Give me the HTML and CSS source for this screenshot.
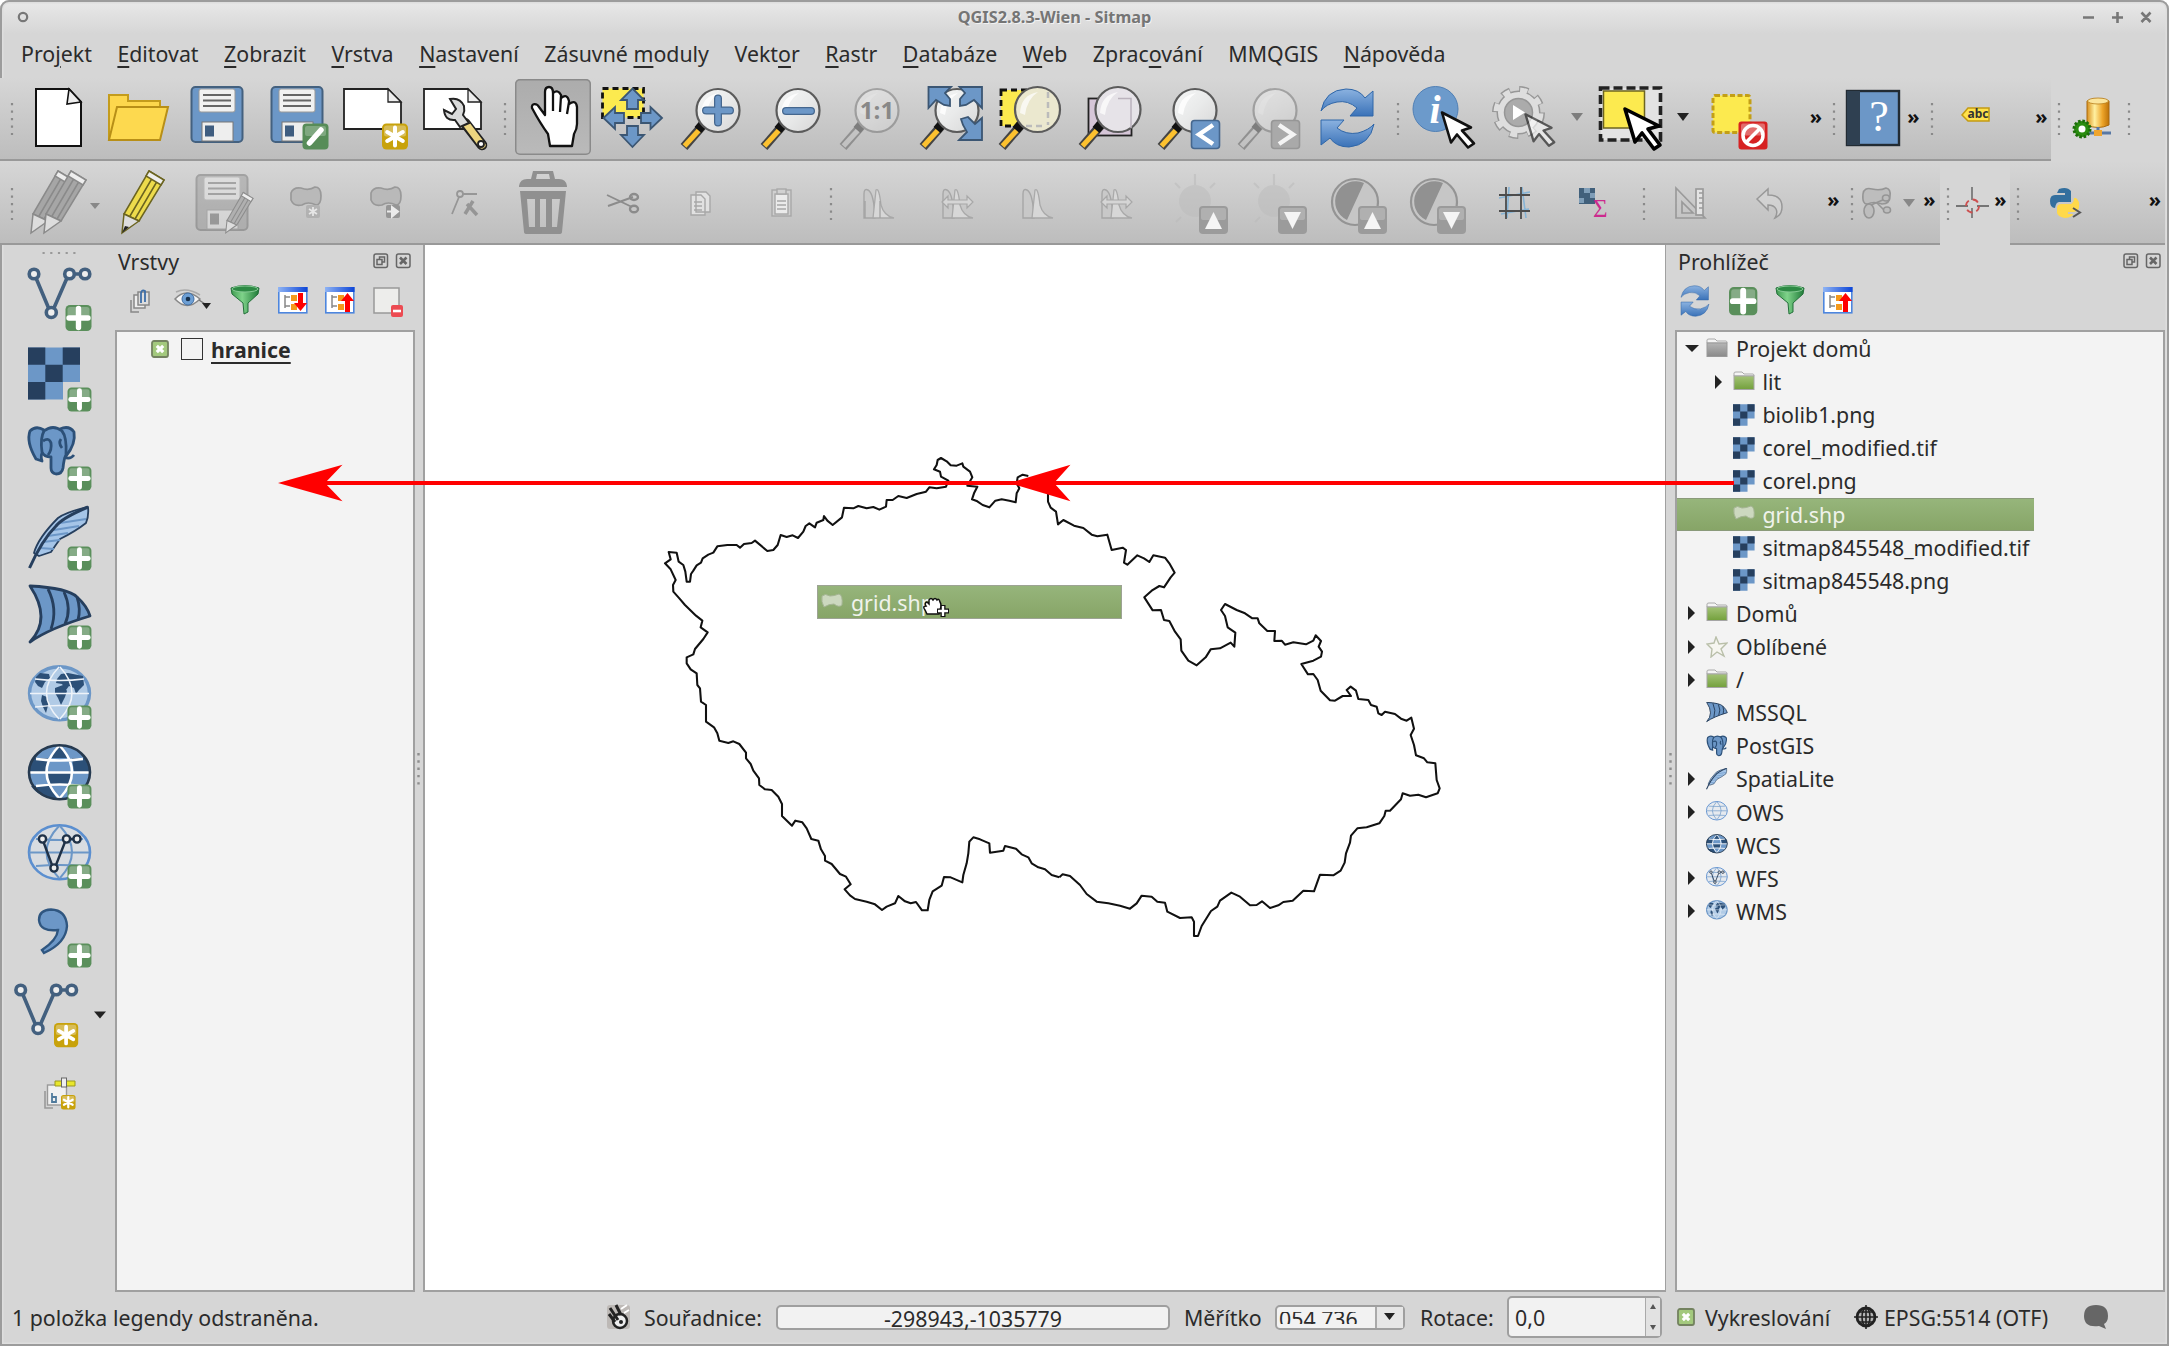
FILE: index.html
```html
<!DOCTYPE html>
<html lang="cs">
<head>
<meta charset="utf-8">
<title>QGIS2.8.3-Wien - Sitmap</title>
<link rel="stylesheet" href="styles.css">
</head>
<body>
<svg class="defs" width="0" height="0" aria-hidden="true">
<defs>
<linearGradient id="lensg" x1="0" y1="0" x2="1" y2="1"><stop offset="0" stop-color="#f6f7f7"/><stop offset=".5" stop-color="#e9eaea"/><stop offset="1" stop-color="#d6d6d6"/></linearGradient>
<linearGradient id="blue" x1="0" y1="0" x2="0" y2="1"><stop offset="0" stop-color="#8bb2e0"/><stop offset="1" stop-color="#3a72b8"/></linearGradient>
<linearGradient id="gold" x1="0" y1="0" x2="1" y2="0"><stop offset="0" stop-color="#d98f1c"/><stop offset=".35" stop-color="#fff0a0"/><stop offset=".7" stop-color="#eda52a"/><stop offset="1" stop-color="#bd7208"/></linearGradient>
<linearGradient id="fun" x1="0" y1="0" x2="1" y2="0"><stop offset="0" stop-color="#3f9a50"/><stop offset=".4" stop-color="#7fd38a"/><stop offset="1" stop-color="#1f7a38"/></linearGradient>
<linearGradient id="gfold" x1="0" y1="0" x2="0" y2="1"><stop offset="0" stop-color="#a3c376"/><stop offset="1" stop-color="#73a03c"/></linearGradient>
<linearGradient id="kfold" x1="0" y1="0" x2="0" y2="1"><stop offset="0" stop-color="#b5b5b5"/><stop offset="1" stop-color="#8a8a8a"/></linearGradient>
<linearGradient id="titleb" x1="0" y1="0" x2="1" y2="0"><stop offset="0" stop-color="#8fb4f4"/><stop offset="1" stop-color="#0d45d8"/></linearGradient>

<g id="dots"><path d="M10 25v32" stroke="#8a8a8a" stroke-width="2.2" stroke-dasharray="2.2 5.3"/></g>
<g id="handle"><path d="M31 47L12 69" stroke="#444" stroke-width="9"/><path d="M29 50L12.500 68" stroke="#fcc12f" stroke-width="5"/><path d="M31 46l-5 6" stroke="#111" stroke-width="9"/></g>
<g id="lens"><circle cx="46" cy="32.500" r="21.500" fill="url(#lensg)" stroke="#5b5b5b" stroke-width="2.200"/><path d="M29 35Q30 18 47 15Q36 22 34 37Z" fill="#fff" opacity=".8"/></g>
<g id="mag"><use href="#handle"/><use href="#lens"/></g>
<g id="cursor"><path d="M0 0L29 15 20 18 32 31 26 35 15 22 9 30Z" fill="#fff" stroke="#111" stroke-width="2.600" stroke-linejoin="round"/></g>
<g id="add"><rect width="26" height="26" rx="4.500" fill="#5a8f5b"/><rect x="2" y="2" width="22" height="11" rx="2.500" fill="#85ab86"/><path d="M13 3.500v19M3.500 13h19" stroke="#fff" stroke-width="5.400" stroke-linecap="round"/></g>
<g id="star"><rect width="26" height="26" rx="4.500" fill="#c8a20b"/><rect x="2" y="2" width="22" height="11" rx="2.500" fill="#d8bd58"/><path d="M13 4v18M5.200 8.500l15.600 9M5.200 17.500l15.600-9" stroke="#fff" stroke-width="4" stroke-linecap="round"/></g>
<g id="floppy"><rect x="14.500" y="9" width="51" height="55" rx="4" fill="#6c97c7" stroke="#44617f" stroke-width="2"/><rect x="22" y="11" width="36" height="23" rx="2" fill="#f1f1f1" stroke="#999"/><path d="M26 17h28M26 22.500h28M26 28h28" stroke="#666" stroke-width="2.200"/><rect x="25" y="44" width="31" height="19" fill="#eee" stroke="#777"/><rect x="28" y="47.500" width="9" height="11" fill="#3f5d80"/></g>
<g id="sheet"><path d="M8 11H52L65 24V51H8Z" fill="#fff" stroke="#222" stroke-width="1.800"/><path d="M52 11V24H65Z" fill="#eee" stroke="#222" stroke-width="1.300"/></g>
<g id="pencil"><path d="M45 10L60 19 35 60 20 53Z"/><path d="M20 53L35 60 18 72Z" fill="#ddd"/><path d="M50 14L26 55M55 17L31 58" fill="none"/><path d="M45 10L60 19 57 24 42 15Z" fill="#eee"/></g>
<g id="blob"><path d="M27 32q2-6 10-5 8 3 14-1 6 0 6 9 0 9-5 9-8-4-14 0-8 2-11-5z" fill="#b5b5b5" stroke="#8d8d8d" stroke-width="1.700"/></g>
<g id="drop"><path d="M8 35h12l-6 8z" fill="#222"/></g>
<g id="peak"><path d="M25 57V33Q25 27 29 29Q35 32 36 57Z" fill="#c9c9c9" stroke="#9e9e9e" stroke-width="1.400"/><path d="M34 57L37 29Q40 26 42 44Q45 55 55 57Z" fill="#dcdcdc" stroke="#a2a2a2" stroke-width="1.300"/></g>
<g id="updown"><rect x="38" y="45" width="29" height="28" rx="4" fill="#9b9b9b"/><rect x="40" y="47" width="25" height="12" rx="2" fill="#b0b0b0"/></g>
<g id="sun" stroke="#b9b9b9" stroke-width="2.200" opacity=".5"><circle cx="35" cy="40" r="16" fill="#bcbcbc" stroke="none"/><path d="M35 13v11M15 22l5 5M55 22l-5 5M16 61l5-5"/></g>
<g id="contrast"><circle cx="35" cy="41" r="23" fill="#c6c6c6" stroke="#949494" stroke-width="2.200"/><path d="M44 22A19 19 0 0 0 27 59Z" fill="#919191"/></g>

<g id="vee" fill="none" stroke="#43607f" stroke-width="3.600"><path d="M36 19L49 50M53.500 50L67 19M74 15h6"/><circle cx="34" cy="15" r="4.800" fill="#eee"/><circle cx="51.300" cy="53.500" r="5" fill="#eee"/><circle cx="69.500" cy="15" r="4.800" fill="#eee"/><circle cx="85" cy="15" r="4.800" fill="#eee"/></g>
<g id="raster"><path d="M28 8.500h52v34.600h-17v17.400H28z" fill="#6c97c7"/><path d="M28 8.500h17.300v17.300H28zM62.700 8.500H80v17.300H62.700zM45.300 25.800h17.400v17.300H45.300zM28 43.100h17.300v17.400H28z" fill="#263f5e"/></g>
<g id="eleph" fill="#6c97c7" stroke="#2c5078" stroke-width="2.800" stroke-linejoin="round"><path d="M44 12Q36 7 30 13Q26 24 36 41L42 43Q40 37 43 34Z"/><path d="M60 11Q69 7 74 14Q76 26 66 38L62 36Z"/><path d="M44 13Q53 6 62 13Q67 19 66 37Q64 40 63 50Q62 56 56 56Q51 55 51 50L51 39Q44 39 42 34Q40 20 44 13Z"/><path d="M64 39Q70 42 74 37" fill="none"/><path d="M43 23Q49 19 51 25Q52 32 48 37M61 21Q58 25 62 30" fill="none"/></g>
<g id="feather" stroke="#263f5e" stroke-linejoin="round"><path d="M88 9Q66 14 58 20Q38 40 34 55L39 58 51 54Q55 48 60 41Q76 33 86 25Q89 18 88 9Z" fill="#a5c5e8" stroke-width="1.800"/><path d="M40 50l14 1M43 44l17-2M48 38l20-3M54 32l25-4M60 25l26-4" stroke="#6c97c7" stroke-width="2"/><path d="M88 9Q62 20 56 28Q42 42 29.500 70" fill="none" stroke-width="3"/></g>
<g id="sail" fill="#6c97c7" stroke="#263f5e" stroke-width="2.800" stroke-linejoin="round"><path d="M30 9Q68 11 77 20Q87 29 90 39Q50 51 30 65Q52 42 30 9Z"/><path d="M48 12Q58 32 51 52M64 15Q72 32 65 47M77 20Q81 32 78 43" fill="none"/></g>
<g id="wms"><ellipse cx="59.500" cy="36.300" rx="30" ry="26.500" fill="#b1cbe6" stroke="#6c97c7" stroke-width="3.400"/><path d="M36 20l4-4 9 1 1 4-5 4-3 6-4-2-3-4zM42 38l5 2 2 5-3 11-3-6-2-6zM57 22l4-5 7-1 15 3 1 9-5 5-3 4-2-6-5-2-3 4-4-6-6-1zM55 31l8-3 4 6-2 6-4 8-3-7-3-5z" fill="#2c5078"/><path d="M30 36.500h59M35 22q25 3 49 0M35 50q25-3 49 0M59 10Q34 36 59 62M60 10Q84 36 60 62" fill="none" stroke="#eef3f9" stroke-width="1.500"/></g>
<g id="wcs"><ellipse cx="59.500" cy="36.300" rx="30.500" ry="27" fill="#6c97c7"/><path d="M33 22h15v14H29q1-9 4-14zM72 22h14q4 6 4 14H74zM50 22Q55 12 59 9q6 6 10 13zM47 37h26l-3 12H50zM31 50h18l8 13q-18-1-26-13z" fill="#2c5078"/><path d="M29 36.500h60M36 23q24 3 47 0M36 50q24-3 47 0M59 10Q34 36 59 62M60 10Q84 36 60 62" fill="none" stroke="#fff" stroke-width="2.500"/><ellipse cx="59.500" cy="36.300" rx="30.500" ry="27" fill="none" stroke="#263a50" stroke-width="2.600"/></g>
<g id="ows" fill="none" stroke="#6c97c7" stroke-width="2"><ellipse cx="59.500" cy="36.300" rx="30.500" ry="27" fill="#d9e2ec" fill-opacity=".5" stroke="#5b8fd0" stroke-width="2.600"/><path d="M29 36.500h60M36 23q24 2 47 0M36 50q24-2 47 0M59 10Q34 36 59 62M60 10Q84 36 60 62"/></g>
<g id="wfs"><use href="#ows"/><g fill="none" stroke="#1f3147" stroke-width="2.400"><path d="M43.500 26L52 49M56 49L65 26M70 23h4"/><circle cx="42.500" cy="23" r="3.600" fill="#eee"/><circle cx="54" cy="52" r="3.600" fill="#eee"/><circle cx="66.500" cy="23" r="3.600" fill="#eee"/><circle cx="77" cy="23" r="3.600" fill="#eee"/></g></g>

<g id="refresh" stroke="#2f66a8" stroke-width="1"><path d="M13 33Q17 12 38 11Q51 11 57 20L65 13V38H42L49 30Q40 22 29 24Q18 26 13 33Z" fill="url(#blue)"/><path d="M66 46Q62 67 41 69Q28 69 22 60L13 67V42H36L29 50Q38 57 50 55Q61 52 66 46Z" fill="url(#blue)"/></g>
<g id="funnel"><path d="M1 3Q15-2 29 3L28 9 18 18V27L14 29 13 18 2 9Z" fill="url(#fun)" stroke="#23703a"/><ellipse cx="15" cy="4" rx="13" ry="3" fill="#2d8a44" stroke="#86c994"/></g>
<g id="panelwin"><rect x=".8" y="2.800" width="28" height="25" fill="#fff" stroke="#4d86de" stroke-width="1.600"/><rect x="0" y="2" width="29.500" height="5" fill="url(#titleb)"/><path d="M7 10v13M7 12h5M7 21h5" stroke="#888" stroke-width="1.500" fill="none"/><rect x="13" y="10" width="6" height="6" fill="#f59a1b"/><rect x="13" y="19" width="6" height="6" fill="#f59a1b"/></g>
<g id="tick"><rect x="1" y="1" width="16" height="16" rx="2" fill="#a3c97d" stroke="#73825f" stroke-width="1.800"/><path d="M5.800 5.800l6.400 6.400M12.200 5.800l-6.400 6.400" stroke="#fff" stroke-width="3.200"/></g>
<g id="shp"><path d="M1 5q3-3 8 0 4 0 9-2 4 1 3 11-3 3-8-1-5 0-10 3-3-5-2-11z" fill="#ccd8bf" stroke="#a4b493"/></g>
<g id="gfolder"><path d="M1 5V2Q1 1 3 1H9L11 3H20Q21 3 21 5Z" fill="#f4f4f4" stroke="#aaa"/><rect x="1" y="5" width="20" height="13.500" fill="url(#gfold)" stroke="#a5a5a5"/></g>
<g id="kfolder"><path d="M1 5V2Q1 1 3 1H9L11 3H20Q21 3 21 5Z" fill="#f4f4f4" stroke="#aaa"/><rect x="1" y="5" width="20" height="13.500" fill="url(#kfold)" stroke="#999"/></g>
<g id="fl" fill="none" stroke="#666" stroke-width="1.500"><rect x="1" y="1" width="13.500" height="13.500" rx="2"/><rect x="6.500" y="4" width="5" height="5"/><rect x="4" y="6.500" width="5" height="5" fill="#d6d6d6"/></g>
<g id="cl" fill="none" stroke="#666" stroke-width="1.500"><rect x="1" y="1" width="13.500" height="13.500" rx="2"/><path d="M4.500 4.500l6.500 6.500M11 4.500l-6.500 6.500" stroke-width="2.600"/></g>
</defs>
</svg>

<div class="window">
<header class="titlebar">
<svg class="wbtn" width="14" height="16"><ellipse cx="7" cy="8" rx="4.200" ry="4.200" fill="none" stroke="#777" stroke-width="2.200"/></svg>
<div class="caption">QGIS2.8.3-Wien - Sitmap</div>
<svg class="wctl" width="76" height="16" stroke="#777" stroke-width="2.600"><path d="M4 8.500h11M33 8.500h11M38.500 3v11M62.500 3.500l9 9.500M71.500 3.500l-9 9.500"/></svg>
</header>

<nav class="menu">
<span>Pro<u>j</u>ekt</span><span><u>E</u>ditovat</span><span><u>Z</u>obrazit</span><span><u>V</u>rstva</span><span><u>N</u>astavení</span><span>Zásuvné <u>m</u>oduly</span><span>Vekt<u>o</u>r</span><span><u>R</u>astr</span><span><u>D</u>atabáze</span><span><u>W</u>eb</span><span>Zprac<u>o</u>vání</span><span>MMQGIS</span><span><u>N</u>ápověda</span>
</nav>

<div class="bar">
<div class="strip first">
<svg class="grip lead"><use href="#dots"/></svg>
<svg class="tool"><path d="M18 11H51L63 24V68H18Z" fill="#fff" stroke="#111" stroke-width="2"/><path d="M51 11L49 26 63 24Z" fill="#eee" stroke="#111" stroke-width="1.600"/></svg>
<svg class="tool"><path d="M11 62V17H30V23H62V31" fill="#fdd74d" stroke="#c49c1c" stroke-width="2"/><path d="M19 29H70L62 62H11Z" fill="#fdd94f" stroke="#b88f17" stroke-width="2"/></svg>
<svg class="tool"><use href="#floppy"/></svg>
<svg class="tool"><use href="#floppy"/><rect x="45.500" y="45.500" width="26" height="26" rx="4" fill="#578c58"/><rect x="48" y="48" width="21" height="10" rx="2" fill="#7fa880"/><path d="M52.500 65L64 52" stroke="#fff" stroke-width="5.500" stroke-linecap="round"/></svg>
<svg class="tool"><use href="#sheet"/><use href="#star" x="46" y="45.500"/></svg>
<svg class="tool"><use href="#sheet"/><path d="M49 45L66 67" stroke="#222" stroke-width="10.500" stroke-linecap="round"/><path d="M48 43L66 67" stroke="#ecd57f" stroke-width="7" stroke-linecap="round"/><circle cx="65" cy="66" r="3" fill="#fff" stroke="#222" stroke-width="1.800"/><path d="M34 21Q44 19 48 28Q49 33 47 37L53 45 44 49 39 42Q29 43 28 32L36 36 40 31Z" fill="#d9dada" stroke="#222" stroke-width="2"/></svg>
<svg class="grip"><use href="#dots"/></svg>
<svg class="tool pressed"><path d="M17 29C16 24 22 24 24 28L30 36 30 13Q30 8 34 8Q38 8 38 14Q43 10 46 16L46 19Q52 14 54 22L54 25Q61 20 62 28L62 45Q62 50 59 55L57 67H35L33 55Q25 44 17 29ZM38 14V32M46 17L45 33M54 23L52 35" fill="#fff" stroke="#111" stroke-width="2.300" stroke-linejoin="round"/></svg>
<svg class="tool"><rect x="9.500" y="10.500" width="41" height="29" fill="#fcea4f" stroke="#111" stroke-width="2.800" stroke-dasharray="6 4"/><g fill="#6c97c7" stroke="#3b5673" stroke-width="1.800"><path d="M39.500 10.500L51 22H45V31H34V22H28ZM39.500 69L51 57H45V48H34V57H28ZM10.500 40L22 29V35H31V45H22V51ZM69 40L57.500 29V35H48V45H57.500V51Z"/></g></svg>
<svg class="tool"><use href="#mag"/><path d="M46 20.500v24M34 32.500h24" stroke="#45678e" stroke-width="8" stroke-linecap="round"/><path d="M46 20.500v24M34 32.500h24" stroke="#6c97c7" stroke-width="5.500" stroke-linecap="round"/></svg>
<svg class="tool"><use href="#mag"/><path d="M34 33h25" stroke="#45678e" stroke-width="8" stroke-linecap="round"/><path d="M34 33h25" stroke="#6c97c7" stroke-width="5.500" stroke-linecap="round"/></svg>
<svg class="tool"><g class="off"><use href="#mag"/></g><text class="one" x="46" y="41">1:1</text></svg>
<svg class="tool"><use href="#mag"/><path d="M17.500 9H40L34 15 39 21V28L33 27 25 22 17.500 30ZM71 9H48.500L54 15 49 21V28L55 27 63 22 71 30ZM71 62V40L64 46 57 39 50 41 52 47 56 54 48 62Z" fill="#6c97c7" stroke="#3b5673" stroke-width="1.800"/></svg>
<svg class="tool"><rect x="11" y="12" width="47" height="36" fill="#fcea4f" stroke="#111" stroke-width="2.800" stroke-dasharray="6 4"/><use href="#handle"/><circle cx="47.500" cy="31.500" r="22.500" fill="#ebe8cf" stroke="#5b5b5b" stroke-width="2.200"/><path d="M58 14v33M36 48h20" stroke="#bbb" stroke-width="2.500" stroke-dasharray="6 4"/><path d="M30 35Q31 17 48 14Q37 21 35 37Z" fill="#fff" opacity=".7"/></svg>
<svg class="tool"><rect x="18.500" y="20.500" width="43" height="37" fill="#d6c6d8" stroke="#222" stroke-width="1.800"/><use href="#handle"/><circle cx="48" cy="31.500" r="22.500" fill="#e6e3e8" stroke="#5b5b5b" stroke-width="2.200"/><path d="M48 20.500H61V50" fill="none" stroke="#bbb3bd" stroke-width="1.500"/><path d="M30 35Q31 17 48 14Q37 21 35 37Z" fill="#fff" opacity=".7"/></svg>
<svg class="tool"><use href="#mag"/><rect x="42.500" y="42.500" width="28" height="28" rx="3" fill="#6c97c7" stroke="#45678e" stroke-width="1.600"/><path d="M64 47L50 56.500 64 66" fill="none" stroke="#fff" stroke-width="4.500"/></svg>
<svg class="tool"><g class="off"><use href="#mag"/></g><rect x="42.500" y="42.500" width="28" height="28" rx="3" fill="#a9a9a9" stroke="#969696" stroke-width="1.600"/><path d="M50 47L64 56.500 50 66" fill="none" stroke="#f4f4f4" stroke-width="4.500"/></svg>
<svg class="tool"><use href="#refresh"/></svg>
<svg class="grip"><use href="#dots"/></svg>
<svg class="tool"><circle cx="29.500" cy="31" r="22.500" fill="#6c9acb" stroke="#4f7fb5"/><text class="info" x="29" y="45">i</text><use href="#cursor" x="36" y="34.500"/></svg>
<svg class="tool"><g><circle cx="33.500" cy="34.500" r="23" fill="none" stroke="#979797" stroke-width="7" stroke-dasharray="9 9.060"/><circle cx="33.500" cy="34.500" r="17.500" fill="none" stroke="#979797" stroke-width="9"/><circle cx="33.500" cy="34.500" r="22" fill="none" stroke="#dedede" stroke-width="6" stroke-dasharray="7 10.280" stroke-dashoffset="-1"/><circle cx="33.500" cy="34.500" r="17" fill="#a9a9a9" stroke="#dedede" stroke-width="7"/><circle cx="33.500" cy="34.500" r="14" fill="#ababab" stroke="#969696" stroke-width="1.500"/><path d="M28 27v15l12-7.500z" fill="#fff"/></g><g opacity=".6"><use href="#cursor" x="45" y="47" transform="translate(0 -6) scale(.9)"/></g></svg>
<svg class="dd dim"><use href="#drop" x="-2"/></svg>
<svg class="tool"><rect x="9.500" y="10" width="60" height="52" fill="#e3e3e3" stroke="#222" stroke-width="3.600" stroke-dasharray="9 4"/><rect x="12.500" y="13" width="41" height="37" fill="#fcea4f" stroke="#6d6520" stroke-width="1.500"/><path d="M34 31L68 48 57 51 69 67 63 71 51 55 44 64Z" fill="#fff" stroke="#000" stroke-width="3.600" stroke-linejoin="round"/></svg>
<svg class="dd"><use href="#drop" x="-1"/></svg>
<svg class="tool"><rect x="17" y="17.500" width="37" height="37" fill="#fcea4f" stroke="#c39f16" stroke-width="3" stroke-dasharray="5 2.500" rx="2"/><rect x="42.500" y="43.500" width="29" height="28" rx="3" fill="#d62222"/><rect x="45" y="45.500" width="24" height="12" rx="2" fill="#e26d6d"/><circle cx="57" cy="57.500" r="10" fill="none" stroke="#fff" stroke-width="3.500"/><path d="M50 64.500l14-14" stroke="#fff" stroke-width="3.500"/></svg>
<span class="more m1">»</span>
<svg class="grip"><use href="#dots"/></svg>
<svg class="help"><rect x="5" y="13" width="52" height="54" fill="#6c97c7" stroke="#222b33" stroke-width="2.400"/><rect x="5" y="13" width="13" height="54" fill="#2f4051"/><text class="q" x="37" y="53">?</text></svg>
<span class="more m2">»</span>
<svg class="grip"><use href="#dots"/></svg>
<svg class="abc"><path d="M22 37l6-7h21v13H28z" fill="#ffe24b" stroke="#c49b13" stroke-width="1.500"/><text class="abctext" x="38" y="40">abc</text></svg>
<span class="more m2">»</span>
</div>
<svg class="grip"><use href="#dots" x="-2"/></svg>
<svg class="db"><path d="M18 23q11-5 22 0v24q-11 5-22 0z" fill="url(#gold)" stroke="#a96a10"/><ellipse cx="29" cy="23" rx="10.500" ry="3" fill="#fbe59c" stroke="#b87d1c" stroke-width=".8"/><path d="M29 49v5M20 55h22" stroke="#5878a4" stroke-width="3"/><rect x="25" y="52" width="8" height="6" fill="#efa52e"/><circle cx="13" cy="51" r="8" fill="#2a8d10" stroke="#1c6d0a" stroke-width="3" stroke-dasharray="2.500 1.700"/><circle cx="13" cy="51" r="3.500" fill="#fff"/></svg>
<svg class="grip"><use href="#dots"/></svg>
</div>

<div class="bar lower">
<div class="strip second">
<svg class="grip lead"><use href="#dots" y="2"/></svg>
<svg class="tool pens"><g fill="#a6a6a6" stroke="#8a8a8a" stroke-width="1.500"><use href="#pencil" x="-5"/><use href="#pencil" x="8"/></g><path d="M72 42h10l-5 6z" fill="#888"/></svg>
<svg class="tool"><g fill="#eddb4c" stroke="#6b6420" stroke-width="1.500"><use href="#pencil" x="-1"/></g><path d="M17 72l3-7 4 1z" fill="#222"/></svg>
<svg class="tool"><g class="off2"><use href="#floppy" x="-3" y="5"/></g><g fill="#b0b0b0" stroke="#8d8d8d" stroke-width="1.600"><use href="#pencil" transform="translate(29 25) scale(.65)"/></g></svg>
<svg class="tool pale"><use href="#blob"/><rect x="42" y="44" width="14" height="13" rx="2" fill="#adadad"/><path d="M49 46v9M45 48l8 5M45 53l8-5" stroke="#eee" stroke-width="1.800"/></svg>
<svg class="tool pale"><use href="#blob"/><rect x="42" y="44" width="14" height="13" rx="2" fill="#8a8a8a"/><path d="M43 50.500h6M48 46l6 4.500-6 5z" stroke="#f4f4f4" stroke-width="2" fill="#f4f4f4"/></svg>
<svg class="tool pale"><g fill="none" stroke="#8a8a8a" stroke-width="1.800"><circle cx="37" cy="33" r="3"/><path d="M40 33h14M36 36l-7 17"/><path d="M44 43l10 11M50 40l-8 13" stroke-width="3.500"/></g></svg>
<svg class="tool"><g fill="#909090"><path d="M16 25q1-7 8-7h4l2-8h20l2 8h4q7 0 8 7v1H16zM34 13l-1 5h14l-1-5z"/><path fill-rule="evenodd" d="M17 30h46l-4 41q0 2-3 2H24q-3 0-3-2zM24 38l2 28h6V38zM37 38v28h6V38zM49 38v28h5l3-28z"/></g></svg>
<svg class="tool pale"><g fill="none" stroke="#7d7d7d" stroke-width="1.900"><path d="M25 34L50 46M26 45L51 36"/><ellipse cx="52" cy="48" rx="4" ry="3.300" stroke-width="2.400"/><ellipse cx="52" cy="36" rx="4" ry="3" stroke-width="2.400"/></g></svg>
<svg class="tool pale"><g fill="#e8e8e8" stroke="#a0a0a0" stroke-width="1.400"><path d="M34 31h10l4 4v16H34zM29 34h10l4 4v16H29z"/><path d="M32 41h8M32 45h8M32 49h8"/></g></svg>
<svg class="tool pale"><g fill="#d2d2d2" stroke="#a0a0a0" stroke-width="1.400"><rect x="31" y="29" width="19" height="26"/><rect x="34" y="33" width="13" height="20" fill="#f4f4f4"/><rect x="36" y="28" width="9" height="5"/><path d="M36 40h9M36 44h9M36 48h9"/></g></svg>
<svg class="grip"><use href="#dots" y="2"/></svg>
<svg class="tool pale"><use href="#peak"/><path d="M26 40v17M41 40v17" stroke="#999" stroke-width="1.300"/></svg>
<svg class="tool pale"><use href="#peak"/><path d="M24 41l6-6v4h19v-4l6 6-6 6v-4H30v4z" fill="#d8d8d8" stroke="#a0a0a0" stroke-width="1.200"/></svg>
<svg class="tool pale"><use href="#peak"/></svg>
<svg class="tool pale"><use href="#peak"/><path d="M24 41l6-6v4h19v-4l6 6-6 6v-4H30v4z" fill="#d8d8d8" stroke="#a0a0a0" stroke-width="1.200"/></svg>
<svg class="tool"><use href="#sun" x="3"/><use href="#updown" x="4"/><path d="M48 68l8.500-17 8.500 17z" fill="#f5f5f5"/></svg>
<svg class="tool"><use href="#sun" x="3"/><use href="#updown" x="4"/><path d="M48 51l8.500 17 8.500-17z" fill="#f5f5f5"/></svg>
<svg class="tool"><use href="#contrast" x="4"/><use href="#updown" x="4"/><path d="M48 68l8.500-17 8.500 17z" fill="#f5f5f5"/></svg>
<svg class="tool"><use href="#contrast" x="4"/><use href="#updown" x="4"/><path d="M48 51l8.500 17 8.500-17z" fill="#f5f5f5"/></svg>
<svg class="tool"><path d="M24 37L55 31M26 53L54 48M34 26L32 57M47 26L51 57" stroke="#86b4d6" stroke-width="1.600"/><path d="M24 34h31M24 50h31M31 26v32M46 26v32" stroke="#4c4c4c" stroke-width="1.800"/></svg>
<svg class="tool"><path d="M25 27h16v16H25z" fill="#41607b"/><path d="M30 27h6v5h5v5h-5v-5h-6zM25 37h5v5h-5z" fill="#7f9eb8"/><text class="sigma" x="39" y="56">Σ</text></svg>
<svg class="grip"><use href="#dots" y="2"/></svg>
<svg class="tool pale"><g fill="none" stroke="#8f8f8f" stroke-width="1.700"><path d="M24 27V57H53ZM30 41v11h11z"/><rect x="44" y="28" width="7" height="26" fill="#eaeaea"/><path d="M47 32h4M47 37h4M47 42h4M47 47h4"/></g></svg>
<svg class="tool pale"><path d="M26 38l11-10v6q14 0 14 12 0 8-7 11 3-5 1-9-2-4-8-4v5z" fill="#d4d4d4" stroke="#8c8c8c" stroke-width="1.500"/></svg>
<span class="more m3">»</span>
<svg class="grip"><use href="#dots" y="2"/></svg>
<svg class="shape"><g fill="#bdbdbd" stroke="#959595" stroke-width="1.600"><path d="M3 33q1-7 9-5 8 2 14-1 5 1 4 8 0 8-8 8-9-3-14 0-6 1-5-10z"/><ellipse cx="9" cy="50" rx="5" ry="7"/><path d="M11 44l14-6M17 42l8 8" fill="none"/><ellipse cx="27" cy="49" rx="3.500" ry="3"/><ellipse cx="26" cy="37" rx="3.500" ry="3"/></g><path d="M43 38h12l-6 8z" fill="#888"/></svg>
<span class="more m4">»</span>
</div>
<div class="plain">
<svg class="grip"><use href="#dots" y="2" x="-2"/></svg>
<svg class="cross"><path d="M14 26v13M14 47v10M-2 45h12M19 45h12" stroke="#555" stroke-width="1.300"/><circle cx="14.500" cy="45" r="6.500" fill="none" stroke="#cc5050" stroke-width="1.800" stroke-dasharray="6 4"/></svg>
<span class="more m5">»</span>
</div>
<div class="strip last">
<svg class="grip"><use href="#dots" y="2" x="-2"/></svg>
<svg class="py"><path d="M20 28q8-3 12 2v11H20q-3 0-4 6-5 0-5-7 0-6 5-6h10v-2h-8z" fill="#336f9e"/><path d="M26 57q-7-1-8-5v-5q0-4 5-4h9q3-2 3-6h2q4 3 3 9 0 4-5 5h-6v2h5q0 3-8 4z" fill="#ffd94a"/><path d="M34 47l7 4.500-7 4.500" fill="none" stroke="#555" stroke-width="2"/></svg>
<span class="more m6">»</span>
</div>
</div>

<main class="work">
<aside class="dock">
<svg class="hgrip" width="111" height="14"><path d="M42.500 8h34" stroke="#999" stroke-width="2.200" stroke-dasharray="2.200 5.500"/></svg>
<svg class="vtool"><use href="#vee"/><use href="#add" x="65.500" y="46"/></svg>
<svg class="vtool"><use href="#raster"/><use href="#add" transform="translate(67.500 48.500) scale(.92)"/></svg>
<svg class="vtool"><use href="#eleph"/><use href="#add" transform="translate(67.500 48.500) scale(.92)"/></svg>
<svg class="vtool"><use href="#feather"/><use href="#add" transform="translate(67.500 48.500) scale(.92)"/></svg>
<svg class="vtool"><use href="#sail"/><use href="#add" transform="translate(67.500 48.500) scale(.92)"/></svg>
<svg class="vtool"><use href="#wms"/><use href="#add" transform="translate(67.500 48.500) scale(.92)"/></svg>
<svg class="vtool"><use href="#wcs"/><use href="#add" transform="translate(67.500 48.500) scale(.92)"/></svg>
<svg class="vtool"><use href="#wfs"/><use href="#add" transform="translate(67.500 48.500) scale(.92)"/></svg>
<svg class="vtool"><path d="M51 14.500Q66 15 67 31Q66 48 44 58L42 55Q57 45 58 35Q40 37 39 25Q39 15 51 14.500Z" fill="#6c97c7" stroke="#2f5680" stroke-width="2.400"/><use href="#add" transform="translate(67.500 48.500) scale(.92)"/></svg>
<svg class="vtool"><use href="#vee" x="-13.300"/><use href="#star" transform="translate(54 48) scale(.93)"/><path d="M94 36.500h12l-6 7z" fill="#222"/></svg>
<svg class="vtool"><path d="M45 37v17h8" fill="none" stroke="#999" stroke-width="1.600"/><rect x="47.500" y="31" width="19" height="20" fill="#f0f0f0" stroke="#999" stroke-width="1.400"/><path d="M52 39v9h4v-5h-4" fill="none" stroke="#4f7a9c" stroke-width="1.800"/><path d="M55 27h8v5h-8zM66 27h9v5h-9z" fill="#e8e62b" stroke="#9a9820"/><rect x="61.500" y="24" width="5" height="9" fill="#eee" stroke="#666"/><use href="#star" transform="translate(61 41) scale(.56)"/></svg>
</aside>

<section class="panel layers">
<div class="phead"><span>Vrstvy</span><svg width="40" height="16"><use href="#fl"/><use href="#cl" x="22.500"/></svg></div>
<div class="ptools">
<svg width="30" height="32"><g fill="#eee" stroke="#888" stroke-width="1.500"><path d="M5 15v12h8" fill="none"/><rect x="8" y="10" width="11" height="13"/><rect x="12" y="7" width="11" height="13" fill="#ddd"/></g><path d="M15 18V8q1-4 4-2v11" fill="none" stroke="#3d6ea8" stroke-width="1.800"/></svg>
<svg class="eye" width="37" height="32"><path d="M1 14Q12 2 26 14Q13 27 1 14Z" fill="#f5f5f5" stroke="#888" stroke-width="1.500"/><path d="M2 7q11-5 24 3" fill="none" stroke="#aaa" stroke-width="1.500"/><circle cx="14" cy="14" r="6" fill="#6d9fd4" stroke="#3f6da3"/><circle cx="14" cy="14" r="2.300" fill="#17304c"/><path d="M25 15l6 4" stroke="#777" stroke-width="1.500"/><path d="M28 18h9l-4.500 6z" fill="#222"/></svg>
<svg width="30" height="32"><use href="#funnel"/></svg>
<svg width="30" height="32"><use href="#panelwin"/><path d="M20 8h5v10h4l-6.500 8-6.500-8h4z" fill="#f00"/></svg>
<svg width="30" height="32"><use href="#panelwin"/><path d="M20 27h5V16h4l-6.500-8-6.500 8h4z" fill="#f00"/></svg>
<svg width="32" height="34"><rect x="1" y="3" width="25" height="25" fill="#ededeb" stroke="#999" stroke-width="1.500"/><rect x="18" y="20" width="12" height="12" rx="2" fill="#ec4b52"/><path d="M20 26h8" stroke="#fff" stroke-width="2.600"/></svg>
</div>
<div class="list"><div class="layer"><svg width="18" height="18"><use href="#tick"/></svg><i class="swatch"></i><b>hranice</b></div></div>
</section>

<div class="split"><svg width="8" height="34"><path d="M3.500 1v32" stroke="#8d8d8d" stroke-width="2.400" stroke-dasharray="2.400 4.900"/></svg></div>

<section class="map">
<svg viewBox="425 245 1240 1045" width="1240" height="1045">
<g fill="none" stroke="#111" stroke-width="6.200" stroke-linejoin="round">
<g transform="translate(640 440) scale(.33333)"><path d="M1165 108 1148 104 1133 112 1130 130 1138 145 1130 160 1127 187 1108 182 1085 178 1066 182 1048 202 1028 195 1012 184 996 178 1002 160 1012 140 982 137 997 112 990 95 970 80 967 70 950 77 932 76 920 64 903 54 893 60 890 75 882 88 900 95 903 110 925 122 918 140 890 145 868 142 858 155 830 162 800 174 775 168 758 180 740 180 738 200 718 209 700 201 680 205 655 198 640 205 612 203 606 232 578 255 562 242 552 228 550 240 530 248 525 262 508 250 497 258 490 275 474 294 458 286 440 291 422 285 413 315 400 330 382 333 345 302 335 309 312 312 300 323 290 315 262 315 232 319 220 338 205 344 188 355 183 368 170 376 160 392 153 402 150 425 140 425 136 395 130 375 116 365 110 338 86 336 92 358 75 370 92 388 107 420 99 435 100 455 118 475 135 495 168 527 187 542 182 562 203 577 190 597 165 627 160 643 140 652 140 670 152 688 170 700 172 735 180 745 183 785 198 795 198 845 222 862 232 880 238 902 265 909 280 904 298 912 318 938 318 955 332 972 340 992 357 1015 358 1035 375 1048 395 1050 415 1070 426 1092 426 1128 456 1157 466 1142 487 1147 500 1165 514 1197 535 1202 543 1228 555 1248 555 1262 575 1272 600 1302 618 1310 632 1333 614 1348 630 1366 645 1377 680 1385 705 1393 726 1410 740 1400 765 1390 775 1368 795 1384 812 1390 828 1386 846 1411 863 1411 868 1380 878 1354 905 1337 912 1311 932 1312 967 1327 970 1305 980 1270 985 1240 988 1205 1000 1192 1020 1198 1048 1210 1050 1238 1090 1232 1095 1218 1128 1226 1145 1243 1165 1252 1175 1270 1195 1282 1215 1288 1235 1305 1258 1312"/></g>
<g transform="translate(1020 440) scale(.33333)"><path d="M118 1312 128 1303 150 1308 180 1335 200 1362 230 1385 265 1390 300 1397 330 1406 350 1390 365 1367 395 1370 412 1385 435 1388 442 1415 480 1434 515 1432 522 1445 522 1488 534 1488 545 1458 573 1413 592 1400 600 1382 634 1358 660 1370 690 1396 710 1395 726 1384 750 1404 775 1396 790 1386 818 1382 850 1352 882 1354 900 1304 940 1306 962 1292 974 1268 978 1240 990 1208 993 1187 1012 1165 1040 1162 1078 1150 1093 1128 1097 1112 1110 1112 1143 1078 1148 1060 1170 1067 1195 1064 1218 1072 1253 1060 1259 1045 1250 1020 1246 970 1222 967 1212 955 1188 946 1182 915 1172 885 1182 866 1174 833 1160 842 1143 836 1125 822 1095 815 1085 825 1075 820 1070 800 1053 795 1045 780 1015 777 1008 752 992 740 980 750 993 768 968 768 945 782 930 781 902 752 893 720 880 702 864 703 844 672 880 662 903 650 906 635 896 620 903 603 887 586 880 602 858 613 820 607 795 614 785 602 763 603 765 573 742 573 718 550 713 535 697 535 675 520 650 510 615 492 603 510 615 528 623 562 646 578 643 620 632 608 600 625 572 628 557 652 530 676 505 662 484 632 482 598 465 575 448 543 432 540 423 510 398 511 373 472 395 452 418 438 432 442 452 412 464 398 448 370 435 353 400 346 388 366 372 355 352 346 322 374 312 368 318 330 308 323 275 330 262 284 232 289 215 284 190 264 162 257 130 240 114 253 108 215 92 203 84 185 84 160"/></g>
</g>
</svg>
</section>

<div class="split right"><svg width="9" height="34"><path d="M4.500 1v32" stroke="#8d8d8d" stroke-width="2.400" stroke-dasharray="2.400 4.900"/></svg></div>

<section class="panel browser">
<div class="phead"><span>Prohlížeč</span><svg width="40" height="16"><use href="#fl"/><use href="#cl" x="22.500"/></svg></div>
<div class="ptools">
<svg width="30" height="32" viewBox="11 10 57 60"><use href="#refresh"/></svg>
<svg width="30" height="32"><use href="#add" transform="translate(1 2) scale(1.090)"/></svg>
<svg width="30" height="32"><use href="#funnel"/></svg>
<svg width="30" height="32"><use href="#panelwin"/><path d="M20 27h5V16h4l-6.500-8-6.500 8h4z" fill="#f00"/></svg>
</div>
<div class="list">
<div class="row"><i class="tw open"></i><svg class="ic"><use href="#kfolder"/></svg><span>Projekt domů</span></div>
<div class="row sub"><i class="tw shut"></i><svg class="ic"><use href="#gfolder"/></svg><span>lit</span></div>
<div class="row sub"><i class="tw"></i><svg class="ic" viewBox="28 8 53 53"><use href="#raster"/></svg><span>biolib1.png</span></div>
<div class="row sub"><i class="tw"></i><svg class="ic" viewBox="28 8 53 53"><use href="#raster"/></svg><span>corel_modified.tif</span></div>
<div class="row sub"><i class="tw"></i><svg class="ic" viewBox="28 8 53 53"><use href="#raster"/></svg><span>corel.png</span></div>
<div class="row sub picked"><i class="tw"></i><svg class="ic"><use href="#shp"/></svg><span>grid.shp</span></div>
<div class="row sub"><i class="tw"></i><svg class="ic" viewBox="28 8 53 53"><use href="#raster"/></svg><span>sitmap845548_modified.tif</span></div>
<div class="row sub"><i class="tw"></i><svg class="ic" viewBox="28 8 53 53"><use href="#raster"/></svg><span>sitmap845548.png</span></div>
<div class="row"><i class="tw shut"></i><svg class="ic"><use href="#gfolder"/></svg><span>Domů</span></div>
<div class="row"><i class="tw shut"></i><svg class="ic"><path d="M10 1l3 7 8-1-6 6 3 7-7-4-6 5 1-8-5-5 7-1z" fill="#f6f6f0" stroke="#b9bfa9" stroke-width="1.400"/></svg><span>Oblíbené</span></div>
<div class="row"><i class="tw shut"></i><svg class="ic"><use href="#gfolder"/></svg><span>/</span></div>
<div class="row"><i class="tw"></i><svg class="ic" viewBox="28 8 64 64"><use href="#sail"/></svg><span>MSSQL</span></div>
<div class="row"><i class="tw"></i><svg class="ic" viewBox="27 7 50 52"><use href="#eleph"/></svg><span>PostGIS</span></div>
<div class="row"><i class="tw shut"></i><svg class="ic" viewBox="28 8 64 64"><use href="#feather"/></svg><span>SpatiaLite</span></div>
<div class="row"><i class="tw shut"></i><svg class="ic" viewBox="28 8 64 64"><use href="#ows"/></svg><span>OWS</span></div>
<div class="row"><i class="tw"></i><svg class="ic" viewBox="28 8 64 64"><use href="#wcs"/></svg><span>WCS</span></div>
<div class="row"><i class="tw shut"></i><svg class="ic" viewBox="28 8 64 64"><use href="#wfs"/></svg><span>WFS</span></div>
<div class="row"><i class="tw shut"></i><svg class="ic" viewBox="28 8 64 64"><use href="#wms"/></svg><span>WMS</span></div>
</div>
</section>
</main>

<footer class="status">
<span class="msg">1 položka legendy odstraněna.</span>
<svg class="mouse" width="23" height="26"><rect x="0" y="1" width="23" height="24" rx="3" fill="#bdb9b6"/><ellipse cx="13" cy="17" rx="7" ry="7" fill="#eee" stroke="#222" stroke-width="2.500"/><path d="M3 4l8 12M9 1l5 10M2 10l6 8" stroke="#222" stroke-width="3"/><circle cx="14" cy="18" r="2" fill="#222"/><path d="M14 5l6-4M17 9l5-3" stroke="#fff" stroke-width="2"/></svg>
<span class="lab1">Souřadnice:</span>
<div class="field coord">-298943,-1035779</div>
<span class="lab2">Měřítko</span>
<div class="field combo"><div class="clip"><span>054 736</span></div><div class="cbtn"><svg width="14" height="10"><path d="M1 1h11l-5.500 7z" fill="#222"/></svg></div></div>
<span class="lab3">Rotace:</span>
<div class="field spin"><span>0,0</span><div class="sbtn"><svg width="8" height="30"><path d="M1 7l3-5 3 5zM1 23l3 5 3-5z" fill="#555"/></svg></div></div>
<svg class="chk" width="18" height="18"><use href="#tick"/></svg>
<span class="lab4">Vykreslování</span>
<svg class="crs" width="24" height="26" fill="none" stroke="#222"><circle cx="12" cy="13" r="9" fill="#b5b5b5" stroke-width="2.800"/><ellipse cx="12" cy="13" rx="4" ry="9" stroke-width="1.600"/><path d="M0 13h24M12 1v24M5 8h14M5 18h14" stroke-width="1.600"/></svg>
<span class="lab5">EPSG:5514 (OTF)</span>
<svg class="bubble" width="26" height="26"><path d="M12 1Q24 1 24 12Q24 18 20 20L22 25 15 22Q0 24 0 12Q0 1 12 1Z" fill="#666"/></svg>
</footer>

<div class="ghost"><svg class="ic"><use href="#shp"/></svg><span>grid.shp</span></div>
<svg class="grab" width="30" height="22"><path d="M4 9Q2 6 5 5L7 7 7 3Q9 0 11 3Q13 0 15 3Q17 1 18 5Q20 8 18 13L17 17H5L3 13Q0 9 4 9Z" fill="#fff" stroke="#111" stroke-width="1.500"/><path d="M21 8v12M15 14h12" stroke="#111" stroke-width="5"/><path d="M21 9v10M16 14h10" stroke="#fff" stroke-width="2.400"/></svg>
<svg class="arrows" width="1460" height="40" fill="#f00"><path d="M45 18.100H1456V21.900H45z"/><path d="M0 20L64.500 1.700 47 20 64.500 38.300zM731 20L792.500 1.700 776 20 792.500 38.300z"/></svg>
</div>
</body>
</html>
```
FILE: styles.css
```css
* { box-sizing: border-box; }
body {
  margin: 0;
  width: 2169px;
  height: 1346px;
  overflow: hidden;
  background: #fff;
  color: #2b2b2b;
  font-family: "Noto Sans", sans-serif;
  font-size: 21.33px;
}
.defs { position: absolute; }
svg { display: block; flex: none; }
.window {
  position: relative;
  width: 2169px;
  height: 1346px;
  display: flex;
  flex-direction: column;
  background: linear-gradient(#e9e9e9 0, #d6d6d6 34px, #d6d6d6 100%);
  border-radius: 9px 9px 0 0;
  box-shadow: inset 0 0 0 2px #9c9c9c, inset 0 0 0 3.5px #dedede;
}
.titlebar { height: 34px; display: flex; align-items: center; justify-content: space-between; padding: 0 14px 0 16px; }
.caption { flex: 1; text-align: center; font-weight: bold; font-size: 16.3px; color: #757575; text-shadow: 1px 1px 0 #f2f2f2; }
.menu { height: 44px; display: flex; align-items: center; gap: 25.55px; padding: 0 0 6px 21px; white-space: nowrap; }
.menu u { text-underline-offset: 4px; text-decoration-thickness: 1.5px; }

.bar { height: 83px; display: flex; }
.strip { height: 100%; display: flex; background: linear-gradient(#d6d6d6, #bdbdbd); border-bottom: 2px solid #999; }
.lower { height: 84px; }
.first { width: 2051px; }
.second { width: 1940px; }
.last { width: 155px; }
.plain { width: 70px; display: flex; }
.grip { width: 18px; height: 81px; }
.lead { margin-left: 2px; width: 16px; }
.tool { width: 79.5px; height: 81px; overflow: visible; }
.pens { width: 87px; }
.pressed { background: linear-gradient(#acacac, #bababa); box-shadow: inset 0 0 0 1.5px #8a8a8a; border-radius: 5px; width: 76px; height: 76px; margin: 1px 2px 0 1.5px; overflow: hidden; }
.dd { width: 26px; height: 81px; }
.dim { opacity: .45; }
.off { opacity: .4; filter: grayscale(1); }
.off2 { opacity: .4; filter: grayscale(1); }
.pale { opacity: .8; }
.one { font: bold 24px "Open Sans", sans-serif; fill: #888; text-anchor: middle; }
.info { font: italic bold 40px "Liberation Serif", serif; fill: #fff; text-anchor: middle; }
.q { font: 44px "Liberation Serif", serif; fill: #fff; text-anchor: middle; }
.abctext { font: bold 12px "Noto Sans", sans-serif; fill: #333; text-anchor: middle; }
.sigma { font: 25px "Liberation Serif", serif; fill: #cc2a8e; }
.more { color: #111; font-weight: bold; font-size: 20px; line-height: 77px; text-align: center; flex: none; }
.m1 { width: 48px; padding-left: 33px; }
.help { width: 62px; height: 81px; }
.m2 { width: 18px; padding-left: 2px; }
.abc { width: 92px; height: 81px; }
.db { width: 50px; height: 81px; }
.m3 { width: 31px; padding-left: 15px; }
.shape { width: 59px; height: 81px; }
.m4 { width: 20px; padding-left: 2px; }
.cross { width: 32px; height: 81px; overflow: visible; }
.m5 { width: 20px; padding-left: 1px; }
.py { width: 106px; height: 81px; margin-left: 11px; }
.m6 { width: 20px; }

.work { height: 1048px; display: flex; padding: 0 4px; }
.dock { width: 111px; }
.vtool { width: 115px; height: 79.5px; margin-left: -4px; }
.hgrip { margin-left: -4px; }
.panel { display: flex; flex-direction: column; padding-top: 2px; }
.layers { width: 300px; }
.phead { height: 30px; display: flex; align-items: center; justify-content: space-between; padding: 0 2px 2px 3px; }
.ptools { height: 53px; display: flex; gap: 17.7px; padding: 8px 0 0 11px; }
.eye { margin-right: 1.5px; }
.list { flex: 1; background: #f3f3f3; border: 2px solid #a0a0a0; margin-bottom: 1px; }
.layer { height: 34px; display: flex; align-items: center; padding-left: 34px; }
.swatch { width: 22px; height: 22px; border: 1.5px solid #333; margin: 0 8px 0 12px; }
.layer b { text-underline-offset: 4px; text-decoration: underline; text-decoration-thickness: 2px; }
.split { width: 8px; display: flex; align-items: center; }
.map { width: 1243px; height: 1047px; background: #fff; border: 2px solid #a0a0a0; border-top: 0; border-right-width: 1px; overflow: hidden; }
.right { width: 9px; }
.browser { width: 490px; }
.browser .phead { padding-left: 3px; }
.browser .ptools { padding-left: 5px; }
.row { height: 33.12px; display: flex; align-items: center; white-space: nowrap; }
.sub { padding-left: 26.5px; }
.ic { width: 22px; height: 22px; margin-right: 8px; }
.tw { width: 29px; display: flex; justify-content: center; }
.tw::before { content: ""; }
.open::before { border: 7px solid transparent; border-top-color: #222; border-bottom: 0; }
.shut::before { border: 7px solid transparent; border-left-color: #222; border-right: 0; }
.picked { background: linear-gradient(#96b57b, #87a567); color: #f0f3ec; width: 357px; border-top: 1px solid #8a9a7a; border-bottom: 1px solid #8a9a7a; }

.status { height: 53px; display: flex; align-items: center; padding: 0 0 5px 12px; white-space: nowrap; }
.msg { width: 595px; }
.mouse { margin-right: 14px; }
.lab1 { width: 132px; }
.field { background: #f2f2f2; border: 2px solid #9f9f9f; border-radius: 5px; }
.coord { width: 394px; height: 25px; line-height: 24px; text-align: center; margin-right: 14px; }
.lab2 { width: 91px; }
.combo { width: 130px; height: 25px; display: flex; margin-right: 15px; }
.clip { flex: 1; height: 12px; margin: 5px 0 0 2px; overflow: hidden; }
.clip span { display: block; line-height: 18px; margin-top: -2px; }
.cbtn { width: 28px; border-left: 2px solid #aaa; display: flex; align-items: center; justify-content: center; background: #e6e6e6; }
.lab3 { width: 87px; }
.spin { width: 155px; height: 42px; display: flex; align-items: center; justify-content: space-between; padding-left: 6px; margin-right: 15px; }
.sbtn { width: 15px; height: 38px; border-left: 1.5px solid #aaa; display: flex; align-items: center; justify-content: center; background: #e2e2e2; }
.chk { margin-right: 10px; }
.lab4 { width: 149px; }
.crs { margin-right: 6px; }
.lab5 { width: 200px; }

/* Drag feedback and annotation arrows float above the map and docks. */
.ghost { position: absolute; left: 817px; top: 585px; width: 305px; height: 34px; display: flex; align-items: center; padding-left: 3px; color: #f0f3ec; background: linear-gradient(#96b57b, #87a567); border: 1px solid #9da394; }
.grab { position: absolute; left: 922px; top: 597px; }
.arrows { position: absolute; left: 278px; top: 463px; }
```
